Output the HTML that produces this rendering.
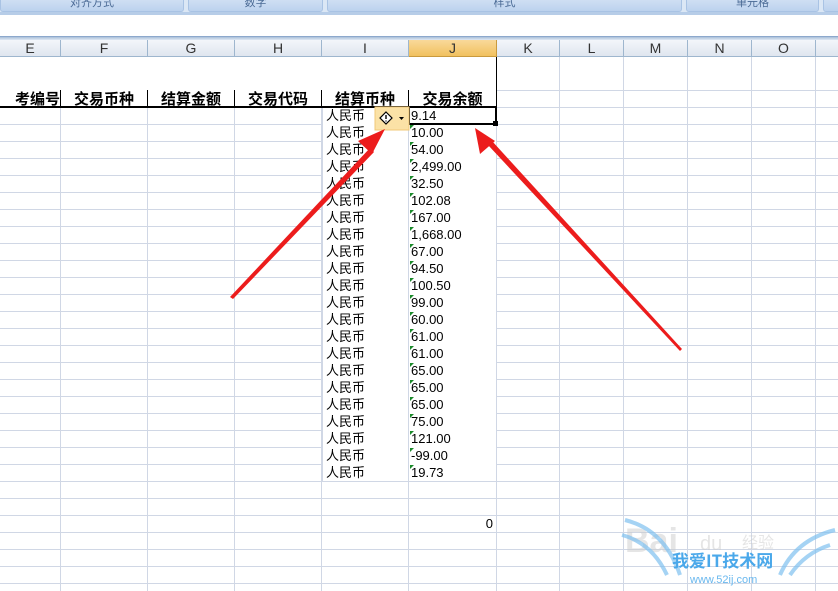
<!DOCTYPE html>
<html><head><meta charset="utf-8"><style>
body{margin:0;width:838px;height:591px;overflow:hidden;background:#fff;position:relative;font-family:"Liberation Sans","Noto Sans CJK SC",sans-serif}
div{position:absolute;box-sizing:border-box}
.rib{top:0;height:12px;background:linear-gradient(#cfdff3,#bcd2ee);border:1px solid #a9c3e4;border-top:none;border-radius:0 0 3px 3px;font-size:11px;color:#4a6a95;text-align:center;line-height:6px;overflow:hidden}
.ch{top:40px;height:17px;border-right:1px solid #9eb6ce;border-bottom:1px solid #9eb6ce;background:linear-gradient(#f3f6fa,#dfe6ef);font-size:14px;color:#333;text-align:center;line-height:17px}
.hd{top:90px;height:18px;border-right:1px solid #000;border-bottom:2px solid #000;font-size:15px;font-weight:bold;text-align:center;line-height:19px;background:#fff;overflow:hidden;white-space:nowrap}
.c{font-size:13px;line-height:18px;height:17px;position:static}
</style></head><body>
<div style="left:0;top:0;width:838px;height:14px;background:#dbe7f5"></div>
<div class="rib" style="left:0;width:184px">对齐方式</div>
<div class="rib" style="left:188px;width:135px">数字</div>
<div class="rib" style="left:327px;width:355px">样式</div>
<div class="rib" style="left:686px;width:133px">单元格</div>
<div class="rib" style="left:823px;width:20px"></div>
<div style="left:0;top:12px;width:838px;height:3px;background:#b7cde8"></div>
<div style="left:0;top:36px;width:838px;height:4px;background:linear-gradient(#a9bfd9,#dfe8f3);border-top:1px solid #8ca8cc"></div>
<div class="ch" style="left:0;width:61px">E</div>
<div class="ch" style="left:61px;width:87px">F</div>
<div class="ch" style="left:148px;width:87px">G</div>
<div class="ch" style="left:235px;width:87px">H</div>
<div class="ch" style="left:322px;width:87px">I</div>
<div class="ch" style="left:409px;width:88px;background:linear-gradient(#f9d99a,#f1c15f);border-color:#c99a3e">J</div>
<div class="ch" style="left:497px;width:63px">K</div>
<div class="ch" style="left:560px;width:64px">L</div>
<div class="ch" style="left:624px;width:64px">M</div>
<div class="ch" style="left:688px;width:64px">N</div>
<div class="ch" style="left:752px;width:64px">O</div>
<div class="ch" style="left:816px;width:30px"></div>
<div style="left:0;top:57px;width:838px;height:534px;background:linear-gradient(to right,transparent 60px,#d0d7e5 60px 61px,transparent 61px 147px,#d0d7e5 147px 148px,transparent 148px 234px,#d0d7e5 234px 235px,transparent 235px 321px,#d0d7e5 321px 322px,transparent 322px 408px,#d0d7e5 408px 409px,transparent 409px 496px,#d0d7e5 496px 497px,transparent 497px 559px,#d0d7e5 559px 560px,transparent 560px 623px,#d0d7e5 623px 624px,transparent 624px 687px,#d0d7e5 687px 688px,transparent 688px 751px,#d0d7e5 751px 752px,transparent 752px 815px,#d0d7e5 815px 816px,transparent 816px)"></div>
<div style="left:0;top:90px;width:838px;height:1px;background:#d0d7e5"></div>
<div style="left:0;top:91px;width:838px;height:500px;background:repeating-linear-gradient(to bottom,transparent 0 16px,#d0d7e5 16px 17px)"></div>
<div style="left:0;top:57px;width:497px;height:34px;background:#fff;border-right:1px solid #000"></div>
<div class="hd" style="left:0;width:61px;text-align:right">考编号</div>
<div class="hd" style="left:61px;width:87px">交易币种</div>
<div class="hd" style="left:148px;width:87px">结算金额</div>
<div class="hd" style="left:235px;width:87px">交易代码</div>
<div class="hd" style="left:322px;width:87px">结算币种</div>
<div class="hd" style="left:409px;width:88px">交易余额</div>
<div style="left:322px;top:108px;width:175px;height:373px;background:#fff;border-left:1px solid #d0d7e5;border-right:1px solid #d0d7e5"></div>
<div style="left:408px;top:108px;width:1px;height:373px;background:#d0d7e5"></div>
<div style="left:326px;top:107px;width:60px">
<div class="c">人民币</div><div class="c">人民币</div><div class="c">人民币</div><div class="c">人民币</div><div class="c">人民币</div><div class="c">人民币</div><div class="c">人民币</div><div class="c">人民币</div><div class="c">人民币</div><div class="c">人民币</div><div class="c">人民币</div><div class="c">人民币</div><div class="c">人民币</div><div class="c">人民币</div><div class="c">人民币</div><div class="c">人民币</div><div class="c">人民币</div><div class="c">人民币</div><div class="c">人民币</div><div class="c">人民币</div><div class="c">人民币</div><div class="c">人民币</div>
</div>
<div style="left:411px;top:107px;width:86px">
<div class="c">9.14</div><div class="c">10.00</div><div class="c">54.00</div><div class="c">2,499.00</div><div class="c">32.50</div><div class="c">102.08</div><div class="c">167.00</div><div class="c">1,668.00</div><div class="c">67.00</div><div class="c">94.50</div><div class="c">100.50</div><div class="c">99.00</div><div class="c">60.00</div><div class="c">61.00</div><div class="c">61.00</div><div class="c">65.00</div><div class="c">65.00</div><div class="c">65.00</div><div class="c">75.00</div><div class="c">121.00</div><div class="c">-99.00</div><div class="c">19.73</div>
</div>
<svg style="position:absolute;left:0;top:0" width="838" height="591">
<g fill="#1a8a2a">
<path d="M410 125h4l-4 4z"/><path d="M410 142h4l-4 4z"/><path d="M410 159h4l-4 4z"/><path d="M410 176h4l-4 4z"/><path d="M410 193h4l-4 4z"/><path d="M410 210h4l-4 4z"/><path d="M410 227h4l-4 4z"/><path d="M410 244h4l-4 4z"/><path d="M410 261h4l-4 4z"/><path d="M410 278h4l-4 4z"/><path d="M410 295h4l-4 4z"/><path d="M410 312h4l-4 4z"/><path d="M410 329h4l-4 4z"/><path d="M410 346h4l-4 4z"/><path d="M410 363h4l-4 4z"/><path d="M410 380h4l-4 4z"/><path d="M410 397h4l-4 4z"/><path d="M410 414h4l-4 4z"/><path d="M410 431h4l-4 4z"/><path d="M410 448h4l-4 4z"/><path d="M410 465h4l-4 4z"/>
</g>
<rect x="409" y="107" width="87" height="17" fill="none" stroke="#000" stroke-width="2"/>
<rect x="493" y="121" width="5" height="5" fill="#000"/>
<rect x="375" y="107" width="34" height="23" fill="#fbe2a6" stroke="#f0c878"/>
<path d="M386 112l6 6-6 6-6-6z" fill="#fff" stroke="#000" stroke-width="1.2"/>
<path d="M386 115v4M386 120.5v1" stroke="#000" stroke-width="1.4"/>
<path d="M399 117h5l-2.5 3z" fill="#000"/>
<g fill="#ec1c1c">
<path d="M230 297L370 148l4 4L233 299z"/><path d="M385 129L358 141l14 13z"/>
<path d="M680 351L488 145l4-4L682 349z"/><path d="M475 128l5 26 15-13z"/>
</g>
<g opacity="0.5">
<text x="625" y="552" font-size="34" font-family="Liberation Sans" fill="#ccc" font-weight="bold">Bai</text>
<text x="700" y="550" font-size="20" fill="#ccc" font-family="Liberation Sans">du</text>
<text x="742" y="548" font-size="16" fill="#ccc" font-family="Noto Sans CJK SC">经验</text>
</g>
<path d="M625 520q40 10 55 55M622 535q30 8 45 40M835 530q-40 10 -55 45M830 545q-25 8 -40 30" stroke="#7fc1f0" stroke-width="4" fill="none" opacity="0.7"/>
<text x="672" y="567" font-size="17" font-weight="bold" fill="#4aa8ea" font-family="Noto Sans CJK SC">我爱IT技术网</text>
<text x="690" y="583" font-size="11" fill="#6ab8ee" font-family="Liberation Sans">www.52ij.com</text>
</svg>
<div class="c" style="position:absolute;left:409px;top:515px;width:84px;text-align:right">0</div>
</body></html>
